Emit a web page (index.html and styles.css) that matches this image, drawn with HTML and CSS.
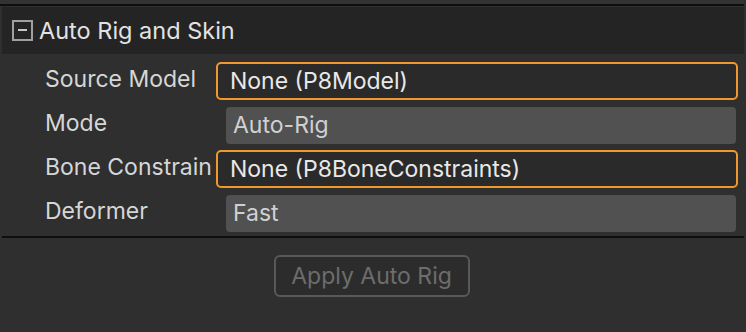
FILE: index.html
```html
<!DOCTYPE html>
<html lang="en">
<head>
    <meta charset="UTF-8">
    <title>Auto Rig and Skin</title>
    <link rel="stylesheet" href="styles.css">
</head>
<body>

    <div class="top-strip"></div>

    <div class="foldout">
        <div class="foldout-header">
            <span class="fold-toggle"></span>
            <span class="foldout-title">Auto Rig and Skin</span>
        </div>

        <div class="fields">
            <div class="field-row">
                <div class="field-label">Source Model</div>
                <div class="object-field">None (P8Model)</div>
            </div>
            <div class="field-row">
                <div class="field-label">Mode</div>
                <div class="enum-field">Auto-Rig</div>
            </div>
            <div class="field-row">
                <div class="field-label">Bone Constrain</div>
                <div class="object-field">None (P8BoneConstraints)</div>
            </div>
            <div class="field-row">
                <div class="field-label">Deformer</div>
                <div class="enum-field">Fast</div>
            </div>
        </div>
    </div>

    <div class="actions">
        <button class="btn" disabled>Apply Auto Rig</button>
    </div>

</body>
</html>
```

FILE: styles.css
```css
/* page */
body {
    margin: 0;
    background-color: #2f2f2f;
    font-family: Inter, "Noto Sans", sans-serif;
    color: #dcdcdc;
    width: 746px;
    height: 332px;
    overflow: hidden;
}

/* strip above the foldout */
.top-strip {
    height: 4px;
    margin-right: 2px;
    background-color: #333;
    border-bottom: 2px solid #0e0e0e;
}

.foldout {
    margin: 0 2px;
    border-bottom: 2px solid #0e0e0e;
}

/* header */
.foldout-header {
    height: 47px;
    margin-top: 1px;
    background-color: #242424;
    display: flex;
    align-items: center;
    padding-left: 10px;
    gap: 6px;
}

.fold-toggle {
    width: 17px;
    height: 17px;
    border: 2px solid #a0a0a0;
    position: relative;
}

.fold-toggle::after {
    content: "";
    position: absolute;
    left: 4px;
    right: 4px;
    top: 7px;
    height: 2px;
    background-color: #c8c8c8;
}

.foldout-title {
    font-size: 23.5px;
    color: #e2e2e2;
}

/* rows */
.fields {
    padding: 5px 6px 1px 0;
}

.field-row {
    display: flex;
    align-items: center;
    height: 44px;
}

.field-label {
    width: 171px;
    padding-left: 43px;
    font-size: 23px;
    color: #d6d6d6;
    white-space: nowrap;
    margin-top: -4px;
}

.object-field {
    flex: 1;
    height: 34px;
    border: 2px solid #f0972e;
    border-radius: 5px;
    background-color: #2a2a2a;
    display: flex;
    align-items: center;
    padding-left: 12px;
    font-size: 23px;
    color: #e8e8e8;
}

.enum-field {
    flex: 1;
    height: 37px;
    margin: 0 2px 0 10px;
    border-radius: 4px;
    background-color: #515151;
    display: flex;
    align-items: center;
    padding-left: 7px;
    font-size: 23px;
    color: #d0d0d0;
}

/* button */
.actions {
    display: flex;
    justify-content: center;
    padding-top: 17px;
    padding-right: 3px;
}

.btn {
    width: 196px;
    height: 42px;
    background-color: #2c2c2c;
    border: 2px solid #595959;
    border-radius: 6px;
    color: #6d6d6d;
    font-family: Inter, "Noto Sans", sans-serif;
    font-size: 23px;
    padding: 0;
}
```
